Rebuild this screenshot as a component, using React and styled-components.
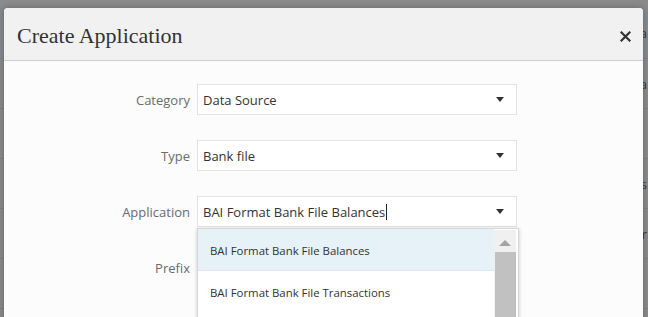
import React from 'react'
import styled, { createGlobalStyle } from 'styled-components'

const GlobalStyle = createGlobalStyle`
  html, body {
    margin: 0;
    padding: 0;
    overflow: hidden;
    background: #8a8a8a;
  }
`

const Page = styled.div`
  position: relative;
  width: 648px;
  height: 317px;
  overflow: hidden;
  background: #8a8a8a;
  font-family: "Open Sans", "Noto Sans", sans-serif;
`

const BackTable = styled.div`
  display: flex;
  flex-direction: column;
  padding-top: 8px;
`

const BackRow = styled.div`
  height: ${props => props.h}px;
  border-bottom: 1px solid #7f7f7f;
  display: flex;
  justify-content: flex-end;
  align-items: center;
  padding-right: 1px;
  font-size: 13px;
  color: #3a3a3a;
  background: ${props => (props.tinted ? '#858a8f' : 'transparent')};
`

const Dialog = styled.div`
  position: absolute;
  left: 4px;
  top: 8px;
  width: 639px;
  height: 330px;
  background: #fcfcfd;
  border-radius: 4px 4px 0 0;
  box-shadow: 0 0 6px rgba(0, 0, 0, 0.25);
  overflow: hidden;
`

const Header = styled.div`
  height: 53px;
  box-sizing: border-box;
  background: #f1f1f2;
  border-bottom: 1px solid #cfcfd1;
  display: flex;
  align-items: center;
  justify-content: space-between;
  padding: 4px 10px 0 13px;
`

const Title = styled.h1`
  margin: 0;
  font-family: "Liberation Serif", Georgia, serif;
  font-weight: normal;
  font-size: 22px;
  color: #333;
`

const CloseButton = styled.button`
  border: 0;
  background: transparent;
  padding: 0;
  width: 16px;
  height: 16px;
  display: flex;
  align-items: center;
  justify-content: center;
  cursor: pointer;
`

const Body = styled.div`
  padding-top: 23px;
  display: grid;
  grid-template-columns: 186px 320px;
  column-gap: 7px;
  row-gap: 25px;
  grid-auto-rows: 31px;
`

const Label = styled.label`
  display: flex;
  align-items: center;
  justify-content: flex-end;
  font-size: 13px;
  color: #6b6b6b;
`

const Field = styled.div`
  position: relative;
  display: flex;
  align-items: center;
  box-sizing: border-box;
  height: 31px;
  border: 1px solid #e3e3e6;
  background: #fff;
  padding: 0 12px 0 5px;
  font-size: 13px;
  color: #333;
`

const Value = styled.span`
  flex: 1;
  display: flex;
  align-items: center;
  white-space: nowrap;
`

const Caret = styled.span`
  display: inline-block;
  width: 1px;
  height: 16px;
  background: #222;
  margin-left: 1px;
`

const Arrow = styled.span`
  width: 0;
  height: 0;
  border-left: 4px solid transparent;
  border-right: 4px solid transparent;
  border-top: 5px solid #333;
`

const Dropdown = styled.div`
  position: absolute;
  left: -1px;
  top: 31px;
  width: 320px;
  height: 120px;
  background: #fff;
  border: 1px solid #d6d6d6;
  box-shadow: 0 1px 4px rgba(0, 0, 0, 0.2);
  display: flex;
  z-index: 2;
`

const Options = styled.ul`
  flex: 1;
  margin: 0;
  padding: 0;
  list-style: none;
`

const Option = styled.li`
  height: 42px;
  box-sizing: border-box;
  display: flex;
  align-items: center;
  padding: 2px 0 0 12px;
  font-size: 11.4px;
  color: #333;
  background: ${props => (props.active ? '#e6f2f8' : '#fff')};
  border-bottom: 1px solid ${props => (props.active ? '#dfe6ea' : '#fff')};
`

const Scrollbar = styled.div`
  width: 22px;
  background: #f0f0f0;
  display: flex;
  flex-direction: column;
  align-items: center;
  margin: 1px 2px 0 0;
`

const ScrollUp = styled.span`
  margin: 10px 0 6px;
  width: 0;
  height: 0;
  border-left: 6px solid transparent;
  border-right: 6px solid transparent;
  border-bottom: 6px solid #a3a3a3;
`

const Thumb = styled.div`
  width: 21px;
  flex: 1;
  background: #c1c1c1;
`

const CloseIcon = () => (
  <svg width="11" height="11" viewBox="0 0 11 11">
    <path d="M1.5 1.5 L9.5 9.5 M9.5 1.5 L1.5 9.5" stroke="#333" strokeWidth="2.2" strokeLinecap="square" />
  </svg>
)

const backRows = [
  { h: 50, text: 'a', tinted: true },
  { h: 49, text: 'a' },
  { h: 49, text: '' },
  { h: 49, text: 's' },
  { h: 49, text: 'r' },
  { h: 49, text: '' },
]

const SelectField = ({ value, caret, children }) => (
  <Field>
    <Value>
      {value}
      {caret && <Caret />}
    </Value>
    <Arrow />
    {children}
  </Field>
)

const App = () => {
  return (
    <Page>
      <GlobalStyle />
      <BackTable>
        {backRows.map((r, i) => (
          <BackRow key={i} h={r.h} tinted={r.tinted}>{r.text}</BackRow>
        ))}
      </BackTable>

      <Dialog>
        <Header>
          <Title>Create Application</Title>
          <CloseButton aria-label="Close"><CloseIcon /></CloseButton>
        </Header>

        <Body>
          <Label>Category</Label>
          <SelectField value="Data Source" />

          <Label>Type</Label>
          <SelectField value="Bank file" />

          <Label>Application</Label>
          <SelectField value="BAI Format Bank File Balances" caret>
            <Dropdown>
              <Options>
                <Option active>BAI Format Bank File Balances</Option>
                <Option>BAI Format Bank File Transactions</Option>
                <Option />
              </Options>
              <Scrollbar>
                <ScrollUp />
                <Thumb />
              </Scrollbar>
            </Dropdown>
          </SelectField>

          <Label>Prefix</Label>
          <Field />
        </Body>
      </Dialog>
    </Page>
  )
}

export default App
